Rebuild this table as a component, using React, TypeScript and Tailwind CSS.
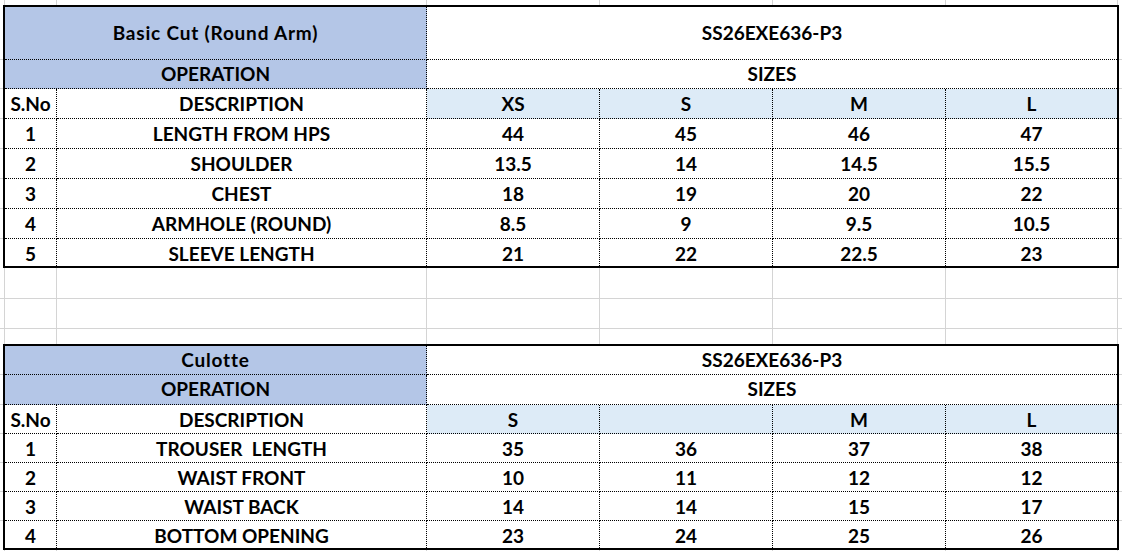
const sheetCols = ['w-[5px]', 'w-[52px]', 'w-[370px]', 'w-[173px]', 'w-[173px]', 'w-[173px]', 'w-[172px]'];

type SizeRow = { no: string; desc: string; values: string[] };

interface SizeTableProps {
  title: string;
  style: string;
  sizes: string[];
  rows: SizeRow[];
  heights: string[];
}

const basicCutRows: SizeRow[] = [
  { no: '1', desc: 'LENGTH FROM HPS', values: ['44', '45', '46', '47'] },
  { no: '2', desc: 'SHOULDER', values: ['13.5', '14', '14.5', '15.5'] },
  { no: '3', desc: 'CHEST', values: ['18', '19', '20', '22'] },
  { no: '4', desc: 'ARMHOLE (ROUND)', values: ['8.5', '9', '9.5', '10.5'] },
  { no: '5', desc: 'SLEEVE LENGTH', values: ['21', '22', '22.5', '23'] },
];

const culotteRows: SizeRow[] = [
  { no: '1', desc: 'TROUSER  LENGTH', values: ['35', '36', '37', '38'] },
  { no: '2', desc: 'WAIST FRONT', values: ['10', '11', '12', '12'] },
  { no: '3', desc: 'WAIST BACK', values: ['14', '14', '15', '17'] },
  { no: '4', desc: 'BOTTOM OPENING', values: ['23', '24', '25', '26'] },
];

// plain spreadsheet strip, gray gridlines only
function GridStrip({ height, lineBottom = true }: { height: string; lineBottom?: boolean }) {
  return (
    <div className={`flex w-full ${height}`}>
      {sheetCols.map((w, i) => (
        <div
          key={i}
          className={`${w} h-full shrink-0 border-r border-[#d4d4d4] ${lineBottom ? 'border-b' : ''}`}
        />
      ))}
      <div className={`flex-1 h-full ${lineBottom ? 'border-b border-[#d4d4d4]' : ''}`} />
    </div>
  );
}

function Stub({ heights }: { heights: string[] }) {
  return (
    <div className="w-[3px] flex flex-col shrink-0">
      {heights.map((h, i) => (
        <div
          key={i}
          className={`${h} ${i < heights.length - 1 ? 'border-b border-[#d4d4d4]' : ''}`}
        />
      ))}
    </div>
  );
}

const cell = 'flex items-center justify-center whitespace-pre';
const dotR = 'border-r border-dotted border-black';
const dotB = 'border-b border-dotted border-black';

function SizeTable({ title, style, sizes, rows, heights }: SizeTableProps) {
  const [hTitle, hOp, hHead, ...hRows] = heights;
  return (
    <div className="w-[1116px] shrink-0 border-2 border-black grid grid-cols-[52px_370px_173px_173px_173px_171px]">
      <div className={`col-span-2 ${hTitle} ${cell} tracking-[0.8px] bg-[#b4c6e7] ${dotR} ${dotB}`}>{title}</div>
      <div className={`col-span-4 ${hTitle} ${cell} ${dotB}`}>{style}</div>

      <div className={`col-span-2 ${hOp} ${cell} bg-[#b4c6e7] ${dotR} ${dotB}`}>OPERATION</div>
      <div className={`col-span-4 ${hOp} ${cell} ${dotB}`}>SIZES</div>

      <div className={`${hHead} ${cell} pt-[2px] ${dotR} ${dotB}`}>S.No</div>
      <div className={`${hHead} ${cell} pt-[2px] ${dotR} ${dotB}`}>DESCRIPTION</div>
      {sizes.map((s, i) => (
        <div
          key={i}
          className={`${hHead} ${cell} pt-[2px] bg-[#ddebf7] ${dotB} ${i < sizes.length - 1 ? dotR : ''}`}
        >
          {s}
        </div>
      ))}

      {rows.map((r, ri) => {
        const last = ri === rows.length - 1;
        const h = hRows[ri];
        const rowCls = last ? 'pt-[4px]' : `pt-[2px] ${dotB}`;
        return [
          <div key={`n${ri}`} className={`${h} ${cell} ${dotR} ${rowCls}`}>{r.no}</div>,
          <div key={`d${ri}`} className={`${h} ${cell} ${dotR} ${rowCls}`}>{r.desc}</div>,
          ...r.values.map((v, vi) => (
            <div
              key={`v${ri}-${vi}`}
              className={`${h} ${cell} ${rowCls} ${vi < r.values.length - 1 ? dotR : ''}`}
            >
              {v}
            </div>
          )),
        ];
      })}
    </div>
  );
}

export default function App() {
  return (
    <div className="w-[1122px] h-[551px] overflow-hidden bg-white flex flex-col font-['Lato','Liberation_Sans',sans-serif] font-bold text-[19px] text-black">
      <GridStrip height="h-[5px]" lineBottom={false} />

      <div className="flex">
        <Stub heights={['h-[55px]', 'h-[29px]', 'h-[30px]', 'h-[30px]', 'h-[30px]', 'h-[30px]', 'h-[30px]', 'h-[29px]']} />
        <SizeTable
          title="Basic Cut (Round Arm)"
          style="SS26EXE636-P3"
          sizes={['XS', 'S', 'M', 'L']}
          rows={basicCutRows}
          heights={['h-[53px]', 'h-[29px]', 'h-[30px]', 'h-[30px]', 'h-[30px]', 'h-[30px]', 'h-[30px]', 'h-[27px]']}
        />
        <Stub heights={['h-[55px]', 'h-[29px]', 'h-[30px]', 'h-[30px]', 'h-[30px]', 'h-[30px]', 'h-[30px]', 'h-[29px]']} />
      </div>

      <GridStrip height="h-[31px]" />
      <GridStrip height="h-[30px]" />
      <GridStrip height="h-[15px]" lineBottom={false} />

      <div className="flex">
        <Stub heights={['h-[31px]', 'h-[30px]', 'h-[29px]', 'h-[29px]', 'h-[29px]', 'h-[29px]', 'h-[29px]']} />
        <SizeTable
          title="Culotte"
          style="SS26EXE636-P3"
          sizes={['S', '', 'M', 'L']}
          rows={culotteRows}
          heights={['h-[29px]', 'h-[30px]', 'h-[29px]', 'h-[29px]', 'h-[29px]', 'h-[29px]', 'h-[27px]']}
        />
        <Stub heights={['h-[31px]', 'h-[30px]', 'h-[29px]', 'h-[29px]', 'h-[29px]', 'h-[29px]', 'h-[29px]']} />
      </div>

      <GridStrip height="h-[1px]" lineBottom={false} />
    </div>
  );
}
